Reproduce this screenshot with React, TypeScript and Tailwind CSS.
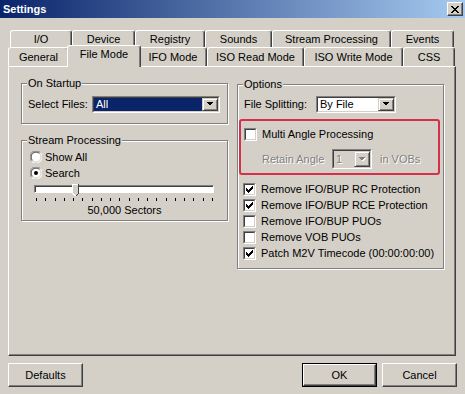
import React from "react";

const raised =
  "border-t border-l border-t-white border-l-white border-r border-b border-r-[#404040] border-b-[#404040] shadow-[inset_-1px_-1px_0_#808080]";

function Tab({ label, w, selected }: { label: string; w: number; selected?: boolean }) {
  if (selected) {
    return (
      <div
        className="relative z-10 -mx-[2px] -mt-[2px] -mb-px h-[22px] bg-[#d4d0c8] border-t border-l border-white border-r border-r-[#404040] shadow-[inset_-1px_0_0_#808080] rounded-t-[3px] flex justify-center pt-[2px]"
        style={{ width: w + 4 }}
      >
        {label}
      </div>
    );
  }
  return (
    <div
      className="h-full bg-[#d4d0c8] border-t border-l border-white border-r border-r-[#404040] shadow-[inset_-1px_0_0_#808080] rounded-t-[3px] flex items-center justify-center"
      style={{ width: w }}
    >
      {label}
    </div>
  );
}

function CheckMark({ color = "#000" }: { color?: string }) {
  const cols = [2, 3, 4, 3, 2, 1, 0];
  return (
    <svg width="7" height="7" viewBox="0 0 7 7" shapeRendering="crispEdges">
      {cols.map((r, c) => (
        <rect key={c} x={c} y={r} width="1" height="3" fill={color} />
      ))}
    </svg>
  );
}

function Check({ checked }: { checked?: boolean }) {
  return (
    <span className="w-[13px] h-[13px] shrink-0 border border-t-[#808080] border-l-[#808080] border-r-white border-b-white">
      <span className="w-full h-full bg-white border border-t-[#404040] border-l-[#404040] border-r-[#d4d0c8] border-b-[#d4d0c8] flex items-center justify-center">
        {checked && <CheckMark />}
      </span>
    </span>
  );
}

function Radio({ checked }: { checked?: boolean }) {
  return (
    <svg width="12" height="12" viewBox="0 0 12 12" className="shrink-0">
      <circle cx="6" cy="6" r="5.5" fill="white" />
      <path d="M1.6 10.4 A5.5 5.5 0 0 1 10.4 1.6" stroke="#808080" strokeWidth="1" fill="none" />
      <path d="M10.4 1.6 A5.5 5.5 0 0 1 1.6 10.4" stroke="#ffffff" strokeWidth="1" fill="none" />
      <path d="M2.5 9.5 A4.5 4.5 0 0 1 9.5 2.5" stroke="#404040" strokeWidth="1" fill="none" />
      <path d="M9.5 2.5 A4.5 4.5 0 0 1 2.5 9.5" stroke="#d4d0c8" strokeWidth="1" fill="none" />
      {checked && <circle cx="6" cy="6" r="2" fill="black" />}
    </svg>
  );
}

function Arrow({ disabled }: { disabled?: boolean }) {
  return (
    <span className={`w-[16px] h-full shrink-0 bg-[#d4d0c8] border border-t-[#d4d0c8] border-l-[#d4d0c8] border-r-[#404040] border-b-[#404040] shadow-[inset_1px_1px_0_#fff,inset_-1px_-1px_0_#808080] flex items-center justify-center`}>
      <svg width="8" height="5" viewBox="0 0 8 5" shapeRendering="crispEdges">
        {disabled && <path d="M1 1 H8 L4.5 4.5 Z" fill="#ffffff" />}
        <path d="M0 0 H7 L3.5 3.5 Z" fill={disabled ? "#808080" : "#000"} />
      </svg>
    </span>
  );
}

function Combo({
  w,
  h = 17,
  text,
  selected,
  disabled,
}: {
  w: number;
  h?: number;
  text: string;
  selected?: boolean;
  disabled?: boolean;
}) {
  return (
    <div
      className="shrink-0 border border-t-[#808080] border-l-[#808080] border-r-white border-b-white"
      style={{ width: w, height: h }}
    >
      <div
        className={`w-full h-full flex border border-t-[#404040] border-l-[#404040] border-r-[#d4d0c8] border-b-[#d4d0c8] ${
          disabled ? "bg-[#d4d0c8]" : "bg-white"
        }`}
      >
        <span
          className={`flex-1 flex items-center pl-[2px] ${
            selected ? "bg-[#0a246a] text-white" : disabled ? "text-[#808080] [text-shadow:1px_1px_0_#fff]" : ""
          }`}
        >
          {text}
        </span>
        <Arrow disabled={disabled} />
      </div>
    </div>
  );
}

function Group({
  label,
  className,
  children,
}: {
  label: string;
  className?: string;
  children: React.ReactNode;
}) {
  return (
    <div
      className={`relative border border-[#808080] shadow-[inset_1px_1px_0_#fff,1px_1px_0_#fff] ${className ?? ""}`}
    >
      <span className="absolute left-[5px] -top-[7px] px-[1px] bg-[#d4d0c8] leading-[13px]">{label}</span>
      {children}
    </div>
  );
}

function CheckRow({ checked, label }: { checked?: boolean; label: string }) {
  return (
    <div className="h-[16px] flex items-center gap-[5px]">
      <Check checked={checked} />
      <span>{label}</span>
    </div>
  );
}

function Button({ label, isDefault }: { label: string; isDefault?: boolean }) {
  if (isDefault) {
    return (
      <div className="w-[75px] h-[24px] border border-black">
        <div className={`w-full h-full bg-[#d4d0c8] ${raised} flex items-center justify-center`}>{label}</div>
      </div>
    );
  }
  return <div className={`w-[75px] h-[24px] bg-[#d4d0c8] ${raised} flex items-center justify-center`}>{label}</div>;
}

export default function App() {
  const ticks = Array.from({ length: 20 });
  return (
    <div className="w-[465px] h-[394px] bg-[#d4d0c8] flex flex-col font-['Liberation_Sans',Arial,sans-serif] text-[11px] leading-[13px] text-black overflow-hidden">
      {/* title bar */}
      <div className="h-[18px] shrink-0 bg-[linear-gradient(to_right,#0a246a,#a6caf0)] flex items-center justify-between pl-[3px] pr-[2px]">
        <span className="text-white font-bold text-[11px]">Settings</span>
        <span className={`w-[16px] h-[14px] bg-[#d4d0c8] ${raised} flex items-center justify-center`}>
          <svg width="8" height="7" viewBox="0 0 8 7" shapeRendering="crispEdges">
            <path d="M0 0 L7 7 M1 0 L8 7 M7 0 L0 7 M8 0 L1 7" stroke="black" strokeWidth="1" />
          </svg>
        </span>
      </div>

      {/* tabs */}
      <div className="mt-[12px] flex h-[17px] pl-[10px]">
        <Tab label="I/O" w={62} />
        <Tab label="Device" w={63} />
        <Tab label="Registry" w={70} />
        <Tab label="Sounds" w={67} />
        <Tab label="Stream Processing" w={119} />
        <Tab label="Events" w={63} />
      </div>
      <div className="flex h-[19px] pl-[8px] items-end">
        <Tab label="General" w={61} />
        <Tab label="File Mode" w={70} selected />
        <Tab label="IFO Mode" w={68} />
        <Tab label="ISO Read Mode" w={97} />
        <Tab label="ISO Write Mode" w={99} />
        <Tab label="CSS" w={52} />
      </div>

      {/* panel */}
      <div className="ml-[8px] w-[448px] h-[290px] shrink-0 border-t border-l border-white border-r border-b border-r-[#404040] border-b-[#404040] shadow-[inset_-1px_-1px_0_#808080] flex gap-[9px] pl-[12px] pt-[16px]">
        {/* left column */}
        <div className="w-[207px] flex flex-col">
          <Group label="On Startup" className="h-[41px] flex items-start pt-[12px] pl-[6px] pr-[7px]">
            <div className="flex items-center justify-between w-full h-[17px]">
              <span>Select Files:</span>
              <Combo w={128} text="All" selected />
            </div>
          </Group>
          <Group label="Stream Processing" className="mt-[16px] h-[81px] pt-[8px]">
            <div className="h-[16px] flex items-center gap-[3px] pl-[8px]">
              <Radio />
              <span>Show All</span>
            </div>
            <div className="h-[16px] flex items-center gap-[3px] pl-[8px]">
              <Radio checked />
              <span>Search</span>
            </div>
            <div className="relative mt-[4px] ml-[12px] w-[180px] h-[12px]">
              <div className="mt-px h-[8px] bg-white border border-t-[#808080] border-l-[#808080] border-r-white border-b-white shadow-[inset_1px_1px_0_#404040]" />
              <svg
                className="absolute left-[38px] -top-[1px]"
                width="7"
                height="13"
                viewBox="0 0 7 13"
                shapeRendering="crispEdges"
              >
                <path d="M0 0 H7 V9 L3.5 12.5 L0 9 Z" fill="#d4d0c8" />
                <path d="M0.5 9 V0.5 H6" stroke="#ffffff" fill="none" />
                <path d="M6.5 0 V9.2 L3.5 12.3" stroke="#404040" fill="none" />
                <path d="M0.5 9 L3.3 11.8" stroke="#ffffff" fill="none" />
              </svg>
            </div>
            <div className="mt-px ml-[14px] w-[177px] h-[3px] flex justify-between">
              {ticks.map((_, i) => (
                <span key={i} className="w-px h-[3px] bg-black" />
              ))}
            </div>
            <div className="mt-[3px] text-center">50,000 Sectors</div>
          </Group>
        </div>

        {/* right column */}
        <div className="w-[207px] flex flex-col">
          <Group label="Options" className="mt-px h-[185px] pt-[11px] pl-[6px]">
            <div className="flex items-center h-[17px]">
              <span className="w-[72px]">File Splitting:</span>
              <Combo w={80} text="By File" />
            </div>
            <div className="mt-[6px] -ml-[5px] w-[201px] h-[56px] border-2 border-[#d5304a] rounded-[3px] pl-[3px] pt-[5px]">
              <CheckRow label="Multi Angle Processing" />
              <div className="mt-[7px] flex items-center h-[20px] pl-[18px] text-[#808080] [text-shadow:1px_1px_0_#fff]">
                <span className="w-[70px]">Retain Angle</span>
                <Combo w={40} h={20} text="1" disabled />
                <span className="ml-[8px]">in VOBs</span>
              </div>
            </div>
            <div className="mt-[6px] -ml-[1px] flex flex-col">
              <CheckRow checked label="Remove IFO/BUP RC Protection" />
              <CheckRow checked label="Remove IFO/BUP RCE Protection" />
              <CheckRow label="Remove IFO/BUP PUOs" />
              <CheckRow label="Remove VOB PUOs" />
              <CheckRow checked label="Patch M2V Timecode (00:00:00:00)" />
            </div>
          </Group>
        </div>
      </div>

      {/* buttons */}
      <div className="mt-[7px] flex justify-between pl-[8px] pr-[8px]">
        <Button label="Defaults" />
        <div className="flex gap-[5px]">
          <Button label="OK" isDefault />
          <Button label="Cancel" />
        </div>
      </div>
    </div>
  );
}
